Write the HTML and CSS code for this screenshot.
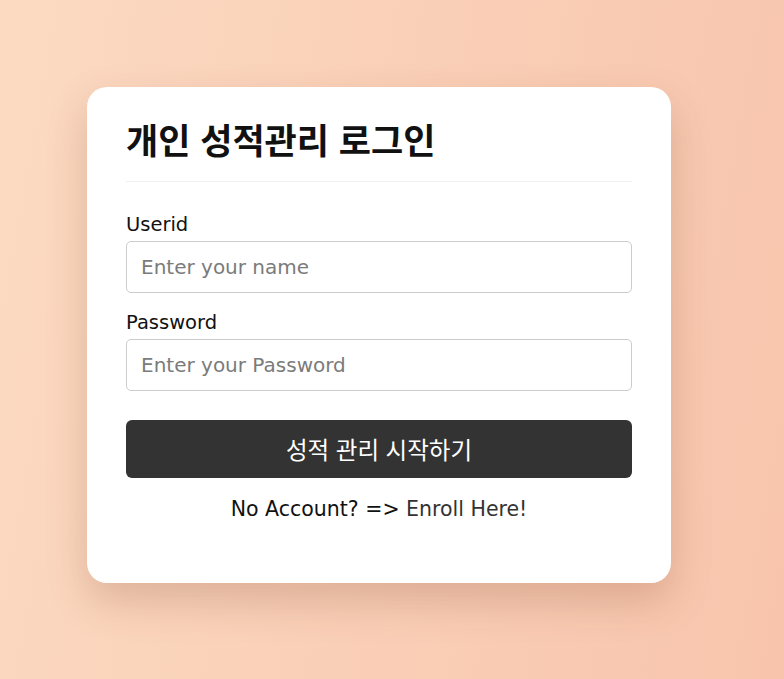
FILE: index.html
```html
<!DOCTYPE html>
<html lang="ko">
<head>
<meta charset="utf-8">
<link rel="stylesheet" href="styles.css">
</head>
<body>
<div class="card">
  <h1 class="title">개인 성적관리 로그인</h1>
  <form class="form">
    <label class="field">
      <span class="label">Userid</span>
      <input class="input" type="text" placeholder="Enter your name">
    </label>
    <label class="field">
      <span class="label">Password</span>
      <input class="input" type="password" placeholder="Enter your Password">
    </label>
    <button class="btn" type="button">성적 관리 시작하기</button>
  </form>
  <p class="footer">No Account? =&gt; <a class="link" href="#">Enroll Here!</a></p>
</div>
</body>
</html>
```
FILE: styles.css
```css
* { box-sizing: border-box; }
html, body { margin: 0; height: 100%; }
body {
  background: linear-gradient(100deg, #fcdac2 0%, #f8c4ac 100%);
  font-family: "DejaVu Sans", "Noto Sans CJK KR", sans-serif;
  padding: 87px 0 0 87px;
}
.card {
  width: 584px;
  height: 496px;
  background: #fff;
  border-radius: 20px;
  padding: 30px 39px;
  box-shadow: 0 18px 40px rgba(120, 60, 30, 0.22);
}
.title {
  margin: 0;
  font-family: "Noto Sans CJK KR", sans-serif;
  font-size: 35px;
  font-weight: 700;
  color: #111;
  line-height: 44px;
  padding-bottom: 20px;
  border-bottom: 1px solid #f0f0f0;
}
.form { display: flex; flex-direction: column; margin-top: 30px; }
.field { display: flex; flex-direction: column; }
.label {
  font-size: 19.5px;
  color: #111;
  line-height: 26px;
  margin-bottom: 3px;
}
.input {
  height: 52px;
  border: 1px solid #ccc;
  border-radius: 5px;
  padding: 0 14px;
  font-family: inherit;
  font-size: 20px;
  color: #333;
  margin-bottom: 17px;
}
.input::placeholder { color: #7b7b7b; }
.btn {
  margin-top: 12px;
  height: 58px;
  background: #333;
  color: #fff;
  border: none;
  border-radius: 6px;
  font-family: "Noto Sans CJK KR", sans-serif;
  font-size: 23.5px;
}
.footer {
  margin: 19px 0 0;
  text-align: center;
  font-size: 20.5px;
  color: #111;
}
.link { color: #333; text-decoration: none; }
```
